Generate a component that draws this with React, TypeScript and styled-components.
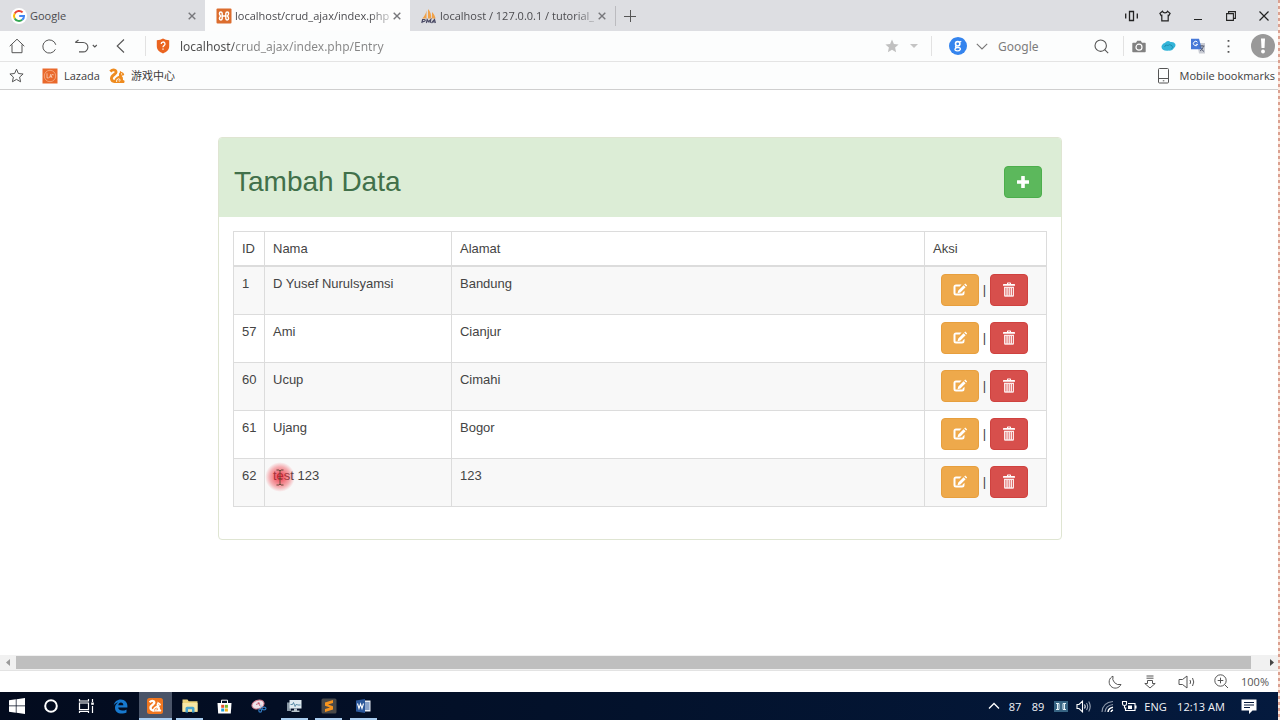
import React from 'react';
import styled, { createGlobalStyle, css } from 'styled-components';

const ui = `"Noto Sans", "Noto Sans CJK SC", sans-serif`;
const uiNarrow = `"Open Sans", "Noto Sans CJK SC", sans-serif`;

const GlobalStyle = createGlobalStyle`
  *, *::before, *::after { box-sizing: border-box; }
  body { margin: 0; background: #fff; font-family: ${ui}; font-size: 12px; color: #444; }
  button, input { font: inherit; color: inherit; margin: 0; padding: 0; border: 0; background: none; }
  svg { display: block; flex: none; }
  input:focus { outline: none; }
`;

const Screen = styled.div`
  position: relative;
  display: flex;
  flex-direction: column;
  min-height: 100vh;
`;

const RecordingEdge = styled.div`
  position: absolute;
  top: 0;
  right: 0;
  bottom: 0;
  width: 2px;
  background: repeating-linear-gradient(#dba090 0 3px, #fdeae0 3px 6px);
`;

/* ---------- tab strip ---------- */

const TabStrip = styled.header`
  display: flex;
  height: 31px;
  background: #dddee2;
`;

const Tab = styled.div<{ $active?: boolean }>`
  display: flex;
  align-items: center;
  flex: 0 1 205px;
  min-width: 0;
  padding: 0 6px 0 11px;
  background: ${(p) => (p.$active ? '#fdfdfd' : 'transparent')};
  color: #4b4b4f;
`;

const TabTitle = styled.button<{ $fade?: boolean }>`
  flex: 1;
  min-width: 0;
  margin-left: 3px;
  overflow: hidden;
  white-space: nowrap;
  text-align: left;
  font-family: ${uiNarrow};
  font-size: 11px;
  line-height: 18px;
  ${(p) => p.$fade && 'mask-image: linear-gradient(to right, #000 calc(100% - 20px), rgba(0, 0, 0, 0.3));'}
`;

const Slot = styled.button<{ $w: number }>`
  display: flex;
  align-items: center;
  justify-content: center;
  flex: none;
  width: ${(p) => p.$w}px;
  height: 100%;
`;

const Divider = styled.span<{ $before?: number; $after?: number }>`
  flex: none;
  width: 1px;
  height: 20px;
  margin: 0 ${(p) => p.$after ?? 0}px 0 ${(p) => p.$before ?? 0}px;
  background: #e2e2e2;
`;

const NewTab = styled.div`
  display: flex;
  align-items: center;
  & > span { background: #bbbbbf; }
`;

const WindowControls = styled.div`
  display: flex;
  margin-left: auto;
`;

/* ---------- toolbars ---------- */

const Bar = styled.div<{ $h: number; $line: string }>`
  display: flex;
  align-items: center;
  height: ${(p) => p.$h}px;
  background: #fcfdfd;
  border-bottom: 1px solid ${(p) => p.$line};
`;

const Address = styled.input`
  flex: 1;
  min-width: 0;
  height: 24px;
  font-size: 12px;
  background: linear-gradient(to right, #4c4c4c 54px, #868686 54px);
  background-clip: text;
  color: transparent;
`;

const SearchField = styled.input`
  width: 88px;
  height: 24px;
  margin-left: 10px;
  font-size: 12px;
  &::placeholder { color: #7c7c7c; opacity: 1; }
`;

const Bookmark = styled.a`
  display: flex;
  align-items: center;
  gap: 6px;
  margin-left: 9px;
  color: #3c3c3c;
  font-family: ${uiNarrow};
  font-size: 11px;
  font-weight: 500;
  line-height: 15px;
  text-decoration: none;
`;

const BookmarkCjk = styled(Bookmark)`
  font-weight: 400;
`;

const MobileBookmarks = styled(Bookmark)`
  margin: 0 5px 0 auto;
  gap: 10px;
`;

/* ---------- page ---------- */

const Page = styled.main`
  flex: 1;
  padding: 47px 16px 24px;
  font: 13px/18px "Liberation Sans", Arial, sans-serif;
  color: #444;
`;

const Panel = styled.section`
  max-width: 844px;
  margin: 0 auto;
  border: 1px solid #dfe5d2;
  border-radius: 4px;
`;

const PanelHeading = styled.div`
  display: flex;
  align-items: center;
  justify-content: space-between;
  height: 79px;
  padding: 9px 19px 0 15px;
  background: #dcedd6;
  border-radius: 3px 3px 0 0;
`;

const Title = styled.h2`
  margin: 0;
  font-size: 28px;
  line-height: 32px;
  font-weight: 400;
  color: #41704a;
`;

const PanelBody = styled.div`
  padding: 14px 14px 32px;
`;

const tones = {
  success: ['#5cb85c', '#4cae4c'],
  warning: ['#eea94b', '#e79f3e'],
  danger: ['#d74f4c', '#cf423f'],
};

const ActionButton = styled.button<{ $tone: keyof typeof tones }>`
  display: flex;
  align-items: center;
  justify-content: center;
  width: 38px;
  height: 32px;
  border: 1px solid ${(p) => tones[p.$tone][1]};
  border-radius: 4px;
  background: ${(p) => tones[p.$tone][0]};
  color: #fff;
`;

const DataTable = styled.table`
  width: 100%;
  table-layout: fixed;
  border-collapse: collapse;
`;

const IdCol = styled.col`
  width: 31px;
`;

const NameCol = styled.col`
  width: 23%;
`;

const ActionCol = styled.col`
  width: 15%;
`;

const cell = css`
  border: 1px solid #dcdcdc;
  text-align: left;
  vertical-align: top;
  font-weight: 400;
`;

const HeadCell = styled.th`
  ${cell}
  padding: 8px 8px 7px;
  border-bottom-width: 2px;
`;

const Row = styled.tr`
  &:nth-child(odd) { background: #f8f8f8; }
`;

const Cell = styled.td`
  ${cell}
  padding: 8px 8px 7px;
`;

const ActionCell = styled.td`
  ${cell}
  padding: 7px 9px 8px 7px;
`;

const Actions = styled.div`
  display: flex;
  align-items: center;
  justify-content: center;
  gap: 4px;
`;

const Pointed = styled.span`
  position: relative;
`;

const Pointer = styled.span`
  position: absolute;
  left: -8px;
  top: -6px;
  display: flex;
  align-items: center;
  justify-content: center;
  width: 30px;
  height: 30px;
  border-radius: 50%;
  background: radial-gradient(circle, rgba(238, 28, 44, 0.7) 15%, rgba(240, 60, 70, 0.4) 48%, rgba(240, 60, 70, 0) 70%);
  pointer-events: none;
`;

/* ---------- bottom bars ---------- */

const ScrollTrack = styled.div`
  display: flex;
  align-items: center;
  height: 16px;
  padding-right: 2px;
  background: #f1f1f1;
  border-bottom: 1px solid #e3e3e3;
`;

const Thumb = styled.div`
  flex: 1;
  height: 13px;
  margin-right: 14px;
  background: #bfbfbf;
`;

const StatusBar = styled.div`
  display: flex;
  align-items: center;
  justify-content: flex-end;
  height: 21px;
  padding-right: 11px;
  background: #fff;
  color: #555;
`;

const Zoom = styled.span`
  margin-left: 4px;
  font-family: ${uiNarrow};
  font-size: 11px;
`;

const Taskbar = styled.footer`
  display: flex;
  justify-content: space-between;
  height: 28px;
  background: linear-gradient(to right, #030b1e, #03122c 50%, #041a3e);
  color: #f2f4f8;
`;

const Apps = styled.nav`
  display: flex;
  justify-content: space-between;
  flex: 0 1 380px;
`;

const TaskButton = styled.button<{ $active?: boolean; $open?: boolean }>`
  display: flex;
  align-items: center;
  justify-content: center;
  flex: 0 1 33px;
  background: ${(p) => (p.$active ? '#4a5468' : 'transparent')};
  position: relative;
  &::after {
    content: '';
    position: absolute;
    inset: auto ${(p) => (p.$active ? 0 : 3)}px 0;
    height: 2px;
    background: ${(p) => (p.$open || p.$active ? '#a9cdf0' : 'transparent')};
  }
`;

const Tray = styled.div`
  display: flex;
  align-items: center;
  margin-right: 14px;
  font-family: ${uiNarrow};
  font-size: 11px;
  white-space: nowrap;
`;

const TrayText = styled.span<{ $w: number }>`
  width: ${(p) => p.$w}px;
  text-align: center;
`;

/* ---------- icons ---------- */

type LineProps = { w?: number; h?: number; sw?: number; color?: string; children: React.ReactNode };

const Line = ({ w = 16, h, sw = 1, color = '#555', children }: LineProps) => (
  <svg width={w} height={h ?? w} viewBox={`0 0 ${w} ${h ?? w}`} fill="none" stroke={color} strokeWidth={sw} aria-hidden="true">
    {children}
  </svg>
);

const Close = () => <Line w={8} sw={1.4} color="#77777b"><path d="M.7.7l6.6 6.6M7.3.7L.7 7.3" /></Line>;

const GoogleIcon = () => (
  <svg width="16" height="16" viewBox="0 0 16 16" fill="none" strokeWidth="2" aria-hidden="true">
    <circle cx="8" cy="8" r="8" fill="#fff" />
    <path d="M11.6 4.400A5 5 0 0 0 3.700 5.400" stroke="#e84335" />
    <path d="M3.700 5.400a5 5 0 0 0 0 5.100" stroke="#fbbc05" />
    <path d="M3.700 10.500a5 5 0 0 0 7.500 1.300" stroke="#34a853" />
    <path d="M11.200 11.800A5 5 0 0 0 13 8.100H8.200" stroke="#4285f4" />
  </svg>
);

const XamppIcon = () => (
  <svg width="16" height="16" viewBox="0 0 16 16" aria-hidden="true">
    <rect x=".5" y=".5" width="15" height="15" rx="1" fill="#dc6d2e" />
    <path d="M6.200 8V5.400Q6 4 4.800 4 3.400 4 3.400 5.400q0 1.400 1.200 2.600Q3.400 9.200 3.400 10.600 3.400 12 4.800 12q1.200 0 1.400-1.400V8h3.600v2.600q.2 1.400 1.400 1.400 1.400 0 1.400-1.400 0-1.400-1.200-2.600 1.200-1.200 1.200-2.600Q12.600 4 11.200 4 10 4 9.800 5.400V8" fill="none" stroke="#fff" strokeWidth="1.400" />
  </svg>
);

const PmaIcon = () => (
  <svg width="16" height="16" viewBox="0 0 16 16" aria-hidden="true">
    <path d="M5.500 2.500v8H1.200c2-2 3.600-4.600 4.300-8zM7 1c2.400 2.600 3.600 6 3.200 9.500H7zM11 4c1.900 1.800 3 4 3.600 6.500H11z" fill="#f0a24a" />
    <path d="M.8 15l.8-3.500h1.600q1.300.2.900 1.300-.4.900-2.500.7M5.400 15l.8-3.500 1.300 2.200 2.300-2.200-.7 3.500M10.500 15l3-3.500.9 3.500m-2.700-1h2.500" fill="none" stroke="#4b4b66" strokeWidth="1.200" />
  </svg>
);

const SquirrelShape = ({ body, eye }: { body: string; eye: string }) => (
  <>
    <path d="M1.300 3.600Q4 .9 6.200 2.400 8.200 4 5.800 6 2.400 8.300 2.400 10.600 2.600 13.500 6.500 13.700" fill="none" stroke={body} strokeWidth="2.800" />
    <path d="M5 15q-.2-5.200 5-7.200-.6-2.400 1-3.500l-.1-1.600 1.600 1.200q2 .4 2.700 2.300.2 1.200-1.500 1.300l-1.100.3q1.800 1.600 1.400 4.200l1.300.6q.7 1-.2 2.400z" fill={body} />
    <path d="M7.600 14q-.6-3 2-3.200 1.900.2 1.500 1.800-.7 1-1.500.2" fill="none" stroke={eye} strokeWidth=".9" />
    <circle cx="12.600" cy="5.900" r=".6" fill={eye} />
  </>
);

const Squirrel = () => (
  <svg width="16" height="16" viewBox="0 0 16 16" aria-hidden="true"><SquirrelShape body="#ee8b1f" eye="#fff" /></svg>
);

const LazadaIcon = () => (
  <svg width="16" height="16" viewBox="0 0 16 16" aria-hidden="true">
    <rect x=".5" y=".5" width="15" height="15" fill="#e9692c" />
    <circle cx="8" cy="8" r="5.700" fill="none" stroke="#f6b088" strokeWidth=".8" />
    <path d="M5 5.300v4.600h1.800M7.500 9.900L8.800 6.300 10 9.900M7.900 8.700h1.800M10 6.500l1.700.4" fill="none" stroke="#fbd3bb" strokeWidth=".8" />
  </svg>
);

const Shield = () => (
  <svg width="14" height="16" viewBox="0 0 14 16" aria-hidden="true">
    <path d="M7 .6q2.500 1.700 6.200 1.700v6C13.200 12 10.500 14.200 7 15.400 3.500 14.200.8 12 .8 8.300v-6Q4.500 2.300 7 .6z" fill="#ea6420" />
    <path d="M5.200 6a1.900 1.900 0 1 1 2.800 1.600C7.200 8.100 7 8.500 7 9.300M7 10.500v1.300" fill="none" stroke="#fff" strokeWidth="1.300" />
  </svg>
);

const Plus = () => (
  <svg width="14" height="14" viewBox="0 0 14 14" fill="currentColor" aria-hidden="true">
    <path d="M5.500 1h3a.3.3 0 0 1 .3.3v3.900h3.900a.3.3 0 0 1 .3.3v3a.3.3 0 0 1-.3.3H8.800v3.900a.3.3 0 0 1-.3.3h-3a.3.3 0 0 1-.3-.3V8.800H1.300A.3.3 0 0 1 1 8.500v-3a.3.3 0 0 1 .3-.3h3.900V1.300A.3.3 0 0 1 5.500 1z" />
  </svg>
);

const Edit = () => (
  <svg width="14" height="14" viewBox="0 0 14 14" aria-hidden="true">
    <path d="M8.600 1.500H3A2.500 2.500 0 0 0 .5 4v6A2.500 2.500 0 0 0 3 12.500h6a2.500 2.500 0 0 0 2.500-2.500V7.800l-2 2v.7h-7V3.500h4.200z" fill="#fff" />
    <path d="M10.600 2.200l2 2-5.200 5.200-2.900.8.800-2.800zM11.200 1.600l1-1 2 1.900-1 1.100z" fill="#fff" />
  </svg>
);

const Trash = () => (
  <svg width="14" height="16" viewBox="0 0 14 16" aria-hidden="true">
    <path d="M5 2V1.200Q5 .5 5.700.5h2.600q.7 0 .7.700V2h3.300q.7 0 .7.700v1.100H1V2.700Q1 2 1.700 2zM6 2h2v-.5H6z" fill="#fff" fillRule="evenodd" />
    <path d="M2 4.800h10v8.700a1.200 1.200 0 0 1-1.200 1.200H3.200A1.200 1.200 0 0 1 2 13.500zM3.500 6v7.200h.8V6zM5.800 6v7.200h.7V6zM7.900 6v7.200h.7V6zM10 6v7.200h.8V6z" fill="#fbe9e9" fillRule="evenodd" />
  </svg>
);

const IBeam = () => (
  <Line w={8} h={17} color="#6c4a3c"><path d="M.5 1H3l1 1 1-1h2.500M4 2v13M.5 16H3l1-1 1 1h2.500M2.500 9.500h3" /></Line>
);

const rows = [
  { id: 1, nama: 'D Yusef Nurulsyamsi', alamat: 'Bandung' },
  { id: 57, nama: 'Ami', alamat: 'Cianjur' },
  { id: 60, nama: 'Ucup', alamat: 'Cimahi' },
  { id: 61, nama: 'Ujang', alamat: 'Bogor' },
  { id: 62, nama: 'test 123', alamat: '123' },
];

const Tabs = () => (
  <TabStrip>
    <Tab>
      <GoogleIcon />
      <TabTitle>Google</TabTitle>
      <Slot $w={15} aria-label="Close tab"><Close /></Slot>
    </Tab>
    <Tab $active>
      <XamppIcon />
      <TabTitle $fade>localhost/crud_ajax/index.php</TabTitle>
      <Slot $w={15} aria-label="Close tab"><Close /></Slot>
    </Tab>
    <Tab>
      <PmaIcon />
      <TabTitle $fade>localhost / 127.0.0.1 / tutorial_</TabTitle>
      <Slot $w={15} aria-label="Close tab"><Close /></Slot>
    </Tab>
    <NewTab>
      <Divider />
      <Slot $w={27} aria-label="New tab"><Line w={12}><path d="M6.500 0v12M0 6.500h12" /></Line></Slot>
    </NewTab>
    <WindowControls>
      <Slot $w={33} aria-label="Mobile view"><Line w={13} h={12} color="#222" sw={1.3}><path d="M4.500 1.500h4v9h-4zM.7 3.500v5M12.300 3.500v5" /></Line></Slot>
      <Slot $w={33} aria-label="Skins"><Line w={12} color="#222" sw={1.2}><path d="M3.500 1.200L.9 3.300l1.200 2.300.7-.3v5.500h6.400V5.300l.7.3 1.200-2.300-2.600-2.100Q8 2.800 6 2.800T3.500 1.200z" /></Line></Slot>
      <Slot $w={33} aria-label="Minimize"><Line w={8} h={12} color="#222"><path d="M0 9.500h8" /></Line></Slot>
      <Slot $w={33} aria-label="Restore"><Line w={10} color="#222" sw={1.1}><path d="M.6 2.600h6.800v6.800H.6zM2.600 2.600v-2h6.800v6.800h-2" /></Line></Slot>
      <Slot $w={33} aria-label="Close"><Line w={10} color="#222" sw={1.2}><path d="M.5.5l9 9M9.500.5l-9 9" /></Line></Slot>
    </WindowControls>
  </TabStrip>
);

const Toolbar = () => (
  <Bar $h={31} $line="#e4e4e4">
    <Slot $w={33} aria-label="Home"><Line w={16}><path d="M.7 8.200L8 1.200l7.300 7M3 6.500v8.200h10V6.500" /></Line></Slot>
    <Slot $w={32} aria-label="Reload"><Line w={15}><path d="M13.400 10.300A6.600 6.600 0 1 1 13.800 5.800" /></Line></Slot>
    <Slot $w={42} aria-label="Undo"><Line w={24} h={14} sw={1.1}><path d="M4.500 1L1.200 3.500M1.200 3.500h8a4.700 4.700 0 0 1 0 9.400H5M18.800 6l2 2 2-2" /></Line></Slot>
    <Slot $w={27} aria-label="Back"><Line w={9} h={14} sw={1.1}><path d="M8 .5L1.200 7 8 13.500" /></Line></Slot>
    <Divider $before={11} />
    <Slot $w={34} aria-label="Site security"><Shield /></Slot>
    <Address aria-label="Address" defaultValue="localhost/crud_ajax/index.php/Entry" />
    <Slot $w={24} aria-label="Add bookmark"><svg width="14" height="14" viewBox="0 0 14 14" fill="#c0c0c0"><path d="M7 .6l1.900 4.300 4.700.5-3.500 3.100 1 4.700L7 10.800l-4.100 2.400 1-4.700L.4 5.400l4.700-.5z" /></svg></Slot>
    <Slot $w={20} aria-label="Bookmark menu"><svg width="8" height="4" viewBox="0 0 8 4" fill="#c4c4c4"><path d="M0 0h8L4 4z" /></svg></Slot>
    <Divider $before={7} $after={8} />
    <Slot $w={36} aria-label="Google">
      <svg width="18" height="18" viewBox="0 0 18 18" fill="none" stroke="#fff">
        <circle cx="9" cy="9" r="9" fill="#3484ee" stroke="none" />
        <circle cx="8.700" cy="6.800" r="2.200" strokeWidth="1.600" />
        <path d="M10.300 5l2-.6M7.300 8.800q-1.800 1.400.3 1.700l2.200.2q2.200.4 1.400 2-.8 1.300-2.900 1.200-2.700-.2-2.300-1.800.2-.8 1.300-1.300" strokeWidth="1.300" />
      </svg>
    </Slot>
    <Line w={12} h={7} sw={1.1} color="#777"><path d="M.8.8L6 6l5.200-5.200" /></Line>
    <SearchField aria-label="Search" placeholder="Google" />
    <Slot $w={30} aria-label="Search"><Line w={15} sw={1.1}><circle cx="6.700" cy="6.700" r="5.700" /><path d="M10.700 10.700l3.500 3.500" /></Line></Slot>
    <Divider $before={7} />
    <Slot $w={30} aria-label="Screenshot">
      <svg width="14" height="13" viewBox="0 0 14 13"><path d="M1 2.800h3L5.200.8h3.600l1.200 2h3q.7 0 .7.700v8q0 .8-.7.800H1q-.7 0-.7-.8v-8q0-.7.7-.7z" fill="#818181" /><circle cx="7" cy="7.200" r="3" fill="none" stroke="#fff" strokeWidth="1.200" /></svg>
    </Slot>
    <Slot $w={29} aria-label="Cloud">
      <svg width="15" height="12" viewBox="0 0 15 12"><path d="M4 2.800Q6.500-.2 9.500 2 13 1.400 14.300 4q.8 2.600-1.500 4.200Q11.500 11 8 10.600q-4 .6-6-.9Q0 8 .7 5.800 1.700 3.500 4 2.800z" fill="#33b4d8" /><path d="M3.500 7Q4.500 3.700 7 5.500 8.500 3.500 11 5.800q1.400 2-.5 3" fill="none" stroke="#1b86a8" strokeWidth=".8" /></svg>
    </Slot>
    <Slot $w={29} aria-label="Translate">
      <svg width="16" height="16" viewBox="0 0 16 16"><path d="M7 5h8v10.500H9z" fill="#c9ccd4" /><path d="M1 .7h8l3 10.500H1z" fill="#4779d8" /><path d="M7.500 4.300a2.200 2.200 0 1 0 .2 2H5.800" fill="none" stroke="#fff" /><path d="M9.500 8h5M12 7v1M10 13q3-1.500 3.500-5M10.500 9.500q1 2.500 3.500 4" fill="none" stroke="#5a6278" /></svg>
    </Slot>
    <Slot $w={33} aria-label="Menu"><svg width="3" height="15" viewBox="0 0 3 15" fill="#555"><path d="M.6 1h1.800v1.800H.6zM.6 6.500h1.800v1.800H.6zM.6 12h1.800v1.800H.6z" /></svg></Slot>
    <Slot $w={35} aria-label="Alerts"><svg width="24" height="24" viewBox="0 0 24 24"><circle cx="12" cy="12" r="12" fill="#999" /><path d="M10 4.500h4l-.5 9.500h-3z" fill="#fff" /><circle cx="12" cy="17.500" r="1.900" fill="#fff" /></svg></Slot>
  </Bar>
);

const Bookmarks = () => (
  <Bar $h={28} $line="#cfcfcf">
    <Slot $w={33} aria-label="Bookmarks"><Line w={15}><path d="M7.500 1.200l1.900 4.300 4.700.5-3.500 3.100 1 4.700-4.100-2.400-4.100 2.400 1-4.700L.9 6l4.700-.5z" /></Line></Slot>
    <Bookmark href="#lazada"><LazadaIcon />Lazada</Bookmark>
    <BookmarkCjk href="#games"><Squirrel />游戏中心</BookmarkCjk>
    <MobileBookmarks href="#mobile">
      <Line w={13} h={16}><path d="M2.500.5h8q1 0 1 1v12.500q0 1-1 1h-8q-1 0-1-1V1.500q0-1 1-1zM1.500 10.500h10M5.800 12.800h1.500" /></Line>
      Mobile bookmarks
    </MobileBookmarks>
  </Bar>
);

const Entries = () => (
  <Page>
    <Panel>
      <PanelHeading>
        <Title>Tambah Data</Title>
        <ActionButton $tone="success" aria-label="Tambah"><Plus /></ActionButton>
      </PanelHeading>
      <PanelBody>
        <DataTable>
          <colgroup>
            <IdCol />
            <NameCol />
            <col />
            <ActionCol />
          </colgroup>
          <thead>
            <tr><HeadCell>ID</HeadCell><HeadCell>Nama</HeadCell><HeadCell>Alamat</HeadCell><HeadCell>Aksi</HeadCell></tr>
          </thead>
          <tbody>
            {rows.map((r) => (
              <Row key={r.id}>
                <Cell>{r.id}</Cell>
                <Cell>{r.id === 62 ? <Pointed>{r.nama}<Pointer><IBeam /></Pointer></Pointed> : r.nama}</Cell>
                <Cell>{r.alamat}</Cell>
                <ActionCell>
                  <Actions>
                    <ActionButton $tone="warning" aria-label="Edit"><Edit /></ActionButton>
                    |
                    <ActionButton $tone="danger" aria-label="Hapus"><Trash /></ActionButton>
                  </Actions>
                </ActionCell>
              </Row>
            ))}
          </tbody>
        </DataTable>
      </PanelBody>
    </Panel>
  </Page>
);

const Status = () => (
  <StatusBar>
    <Slot $w={35} aria-label="Night mode"><Line w={14}><path d="M5 1.200a6.200 6.200 0 1 0 8 8.300A6.600 6.600 0 0 1 5 1.200z" /></Line></Slot>
    <Slot $w={36} aria-label="Downloads"><Line w={12} h={14}><path d="M2.500 1h7M2.500 3.200h7M3.500 5.500h5v3h2.700L6 13 .8 8.500h2.700z" /></Line></Slot>
    <Slot $w={37} aria-label="Sound"><Line w={18} h={14}><path d="M1 4.500h3.500L9 1v12L4.500 9.500H1zM12 5q1.300 2 0 4M14.500 3q2.500 4 0 8" /></Line></Slot>
    <Slot $w={32} aria-label="Zoom"><Line w={15}><circle cx="6.500" cy="6.500" r="5.700" /><path d="M10.700 10.700L14 14M3.700 6.500h5.600M6.500 3.700v5.600" /></Line></Slot>
    <Zoom>100%</Zoom>
  </StatusBar>
);

const Windows = () => (
  <Taskbar>
    <Apps aria-label="Taskbar">
      <TaskButton aria-label="Start"><svg width="16" height="16" viewBox="0 0 16 16" fill="#fff"><path d="M0 2.300L6.800 1.300v6.300H0zM7.500 1.200L16 0v7.600H7.500zM0 8.300h6.800v6.400L0 13.700zM7.500 8.300H16V16l-8.500-1.200z" /></svg></TaskButton>
      <TaskButton aria-label="Cortana"><Line w={14} sw={2} color="#fff"><circle cx="7" cy="7" r="5.800" /></Line></TaskButton>
      <TaskButton aria-label="Task view"><Line w={16} h={14} sw={1.2} color="#fff"><path d="M1.500 4h9v6.500h-9zM1.500 0v2h9V0M1.500 14v-1.700h9V14M14.500 0v3M14.500 7v7" /><path d="M13.200 3.500h2.600v2.300h-2.600z" fill="#fff" stroke="none" /></Line></TaskButton>
      <TaskButton aria-label="Edge"><svg width="15" height="15" viewBox="0 0 15 15"><path d="M.7 6.600C1.400 2.700 4.200.5 7.800.5c4.200 0 6.600 3 6.600 6.600v1.500H5.200c.1 2 2 3 4 3 1.700 0 3-.4 4.300-1.200v3.100c-1.400.8-3 1.100-4.900 1.100-4 0-6.600-2.200-6.600-5.900 0-2.200 1.200-4 3.200-5.100-1.900.3-3.500 1.300-4.500 3zM5.300 6.200h5c0-1.700-.8-2.600-2.400-2.600-1.400 0-2.300.9-2.600 2.600z" fill="#1779cf" fillRule="evenodd" /></svg></TaskButton>
      <TaskButton $active aria-label="UC Browser"><svg width="16" height="16" viewBox="0 0 16 16"><rect width="16" height="16" rx="2.500" fill="#f0761f" /><g transform="translate(1.500 1.300) scale(.82)"><SquirrelShape body="#fff" eye="#f0761f" /></g></svg></TaskButton>
      <TaskButton $open aria-label="File Explorer"><svg width="16" height="14" viewBox="0 0 16 14"><path d="M.5.5h5l1.200 1.700h8.800v10.500H.5z" fill="#ecd37b" /><path d="M.5 4h15v8.700H.5z" fill="#f6e6a4" /><path d="M3.500 13.500V9.300q0-1.600 1.600-1.600h5.800q1.600 0 1.600 1.600v4.200H10V10.300H6v3.200z" fill="#48a5cf" /></svg></TaskButton>
      <TaskButton aria-label="Store"><svg width="15" height="15" viewBox="0 0 15 15"><path d="M4.500 4.500V1.200h6v3.300" fill="none" stroke="#fff" /><path d="M.5 4h14l-.7 10.500H1.200z" fill="#fff" /><path d="M4.200 5.800h3v3h-3z" fill="#e5502e" /><path d="M7.900 5.800h3v3h-3z" fill="#77b82a" /><path d="M4.200 9.500h3v3h-3z" fill="#20a1da" /><path d="M7.900 9.500h3v3h-3z" fill="#f2b418" /></svg></TaskButton>
      <TaskButton aria-label="Snipping Tool"><svg width="16" height="14" viewBox="0 0 16 14"><ellipse cx="7" cy="5.500" rx="6.200" ry="4.200" transform="rotate(-18 7 5.500)" fill="#efe3ea" stroke="#d27a8a" /><path d="M5 5.500l4-1.500M7 3l2 4" stroke="#c44b62" strokeWidth=".8" /><path d="M9 6l3 2.500M10 5.500L9.200 10" stroke="#b9c3d6" /><ellipse cx="13" cy="9.500" rx="2" ry="1.400" fill="none" stroke="#317ac0" strokeWidth="1.200" /><ellipse cx="9.200" cy="11.500" rx="1.400" ry="1.700" fill="none" stroke="#317ac0" strokeWidth="1.200" /></svg></TaskButton>
      <TaskButton $open aria-label="Monitor"><svg width="16" height="14" viewBox="0 0 16 14"><path d="M1 3.500h4v8.500H1z" fill="#8998a5" /><path d="M3.500 1h12v8.500h-12z" fill="#dfeaf0" /><path d="M4.500 5.500h2l1-2 1.600 4L10.500 5l1 1h3" fill="none" stroke="#3b7695" strokeWidth=".8" /><path d="M8 9.500h3v2h2.500v1.500h-8v-1.500H8z" fill="#b9c5cd" /></svg></TaskButton>
      <TaskButton $open aria-label="Sublime Text"><svg width="16" height="16" viewBox="0 0 16 16"><rect x=".5" y=".5" width="15" height="15" rx="1.500" fill="#494949" /><path d="M4 4.500L12 2v3L7 6.600l5 1.700v3.200L4 14v-3l5-1.600-5-1.700z" fill="#f7941e" /></svg></TaskButton>
      <TaskButton $open aria-label="Word"><svg width="15" height="14" viewBox="0 0 15 14"><path d="M8 1.500h6.500v11H8z" fill="#e8eef7" /><path d="M9 4h4.500M9 6h4.500M9 8h4.500M9 10h4.500" stroke="#2b579a" /><path d="M0 1.500L9 0v14l-9-1.500z" fill="#2b579a" /><path d="M1.500 4.500L3 9.500l1.500-4.500L6 9.500l1.500-5" fill="none" stroke="#fff" strokeWidth="1.100" /></svg></TaskButton>
    </Apps>
    <Tray>
      <Slot $w={22} aria-label="Show hidden icons"><Line w={12} h={8} color="#fff" sw={1.3}><path d="M1 6.500l5-5 5 5" /></Line></Slot>
      <TrayText $w={20}>87</TrayText>
      <TrayText $w={26}>89</TrayText>
      <Slot $w={20} aria-label="Graphics"><svg width="14" height="11" viewBox="0 0 14 11"><rect width="14" height="11" fill="#376483" /><path d="M2 2.500h3v6H2M12 2.500H9v6h3M2 8.500M3.500 2.500v6M10.500 2.500v6" fill="none" stroke="#e4f1f7" /></svg></Slot>
      <Slot $w={26} aria-label="Volume"><Line w={16} h={13} color="#fff" sw={1.1}><path d="M1 4.500h2L6.500 1.200v10.600L3 8.500H1zM8.500 4.500q1.300 2 0 4" /><path d="M10.500 3q2.300 3.500 0 7M12.700 1.500q3 5 0 10" stroke="#9ba5b6" /></Line></Slot>
      <Slot $w={20} aria-label="Network"><Line w={13} color="#8b96a8" sw={1.1}><path d="M1 12Q1.500 2.500 12 1.500M4 12q.5-6.500 8-7.500" /><path d="M7 12q.5-4 5-4.700M10 12q.2-1.500 2-2" stroke="#fff" strokeWidth="1.500" /></Line></Slot>
      <Slot $w={23} aria-label="Battery"><Line w={16} h={13} color="#fff" sw={1.1}><path d="M7 3.500h7v7H4.500V8M15 5.500v3M1.500 1.500h4v2.500q0 1.500-2 1.500t-2-1.500zM3.500 5.500V8h2" /><path d="M7 5.500h4v3.500H7z" fill="#fff" stroke="none" /></Line></Slot>
      <TrayText $w={31}>ENG</TrayText>
      <TrayText $w={60}>12:13 AM</TrayText>
      <Slot $w={35} aria-label="Notifications"><svg width="16" height="15" viewBox="0 0 16 15"><path d="M.5.5h15v11H11.500L8 15v-3.500H.5z" fill="#fff" /><path d="M3 3.500h10M3 6h10M3 8.500h6" stroke="#04183a" /></svg></Slot>
    </Tray>
  </Taskbar>
);

export default function App() {
  return (
    <Screen>
      <GlobalStyle />
      <Tabs />
      <Toolbar />
      <Bookmarks />
      <Entries />
      <ScrollTrack>
        <Slot $w={16} aria-label="Scroll left"><svg width="4" height="7" viewBox="0 0 4 7" fill="#9a9a9a"><path d="M4 0v7L0 3.500z" /></svg></Slot>
        <Thumb />
        <Slot $w={13} aria-label="Scroll right"><svg width="4" height="7" viewBox="0 0 4 7" fill="#444"><path d="M0 0v7l4-3.500z" /></svg></Slot>
      </ScrollTrack>
      <Status />
      <Windows />
      <RecordingEdge />
    </Screen>
  );
}
